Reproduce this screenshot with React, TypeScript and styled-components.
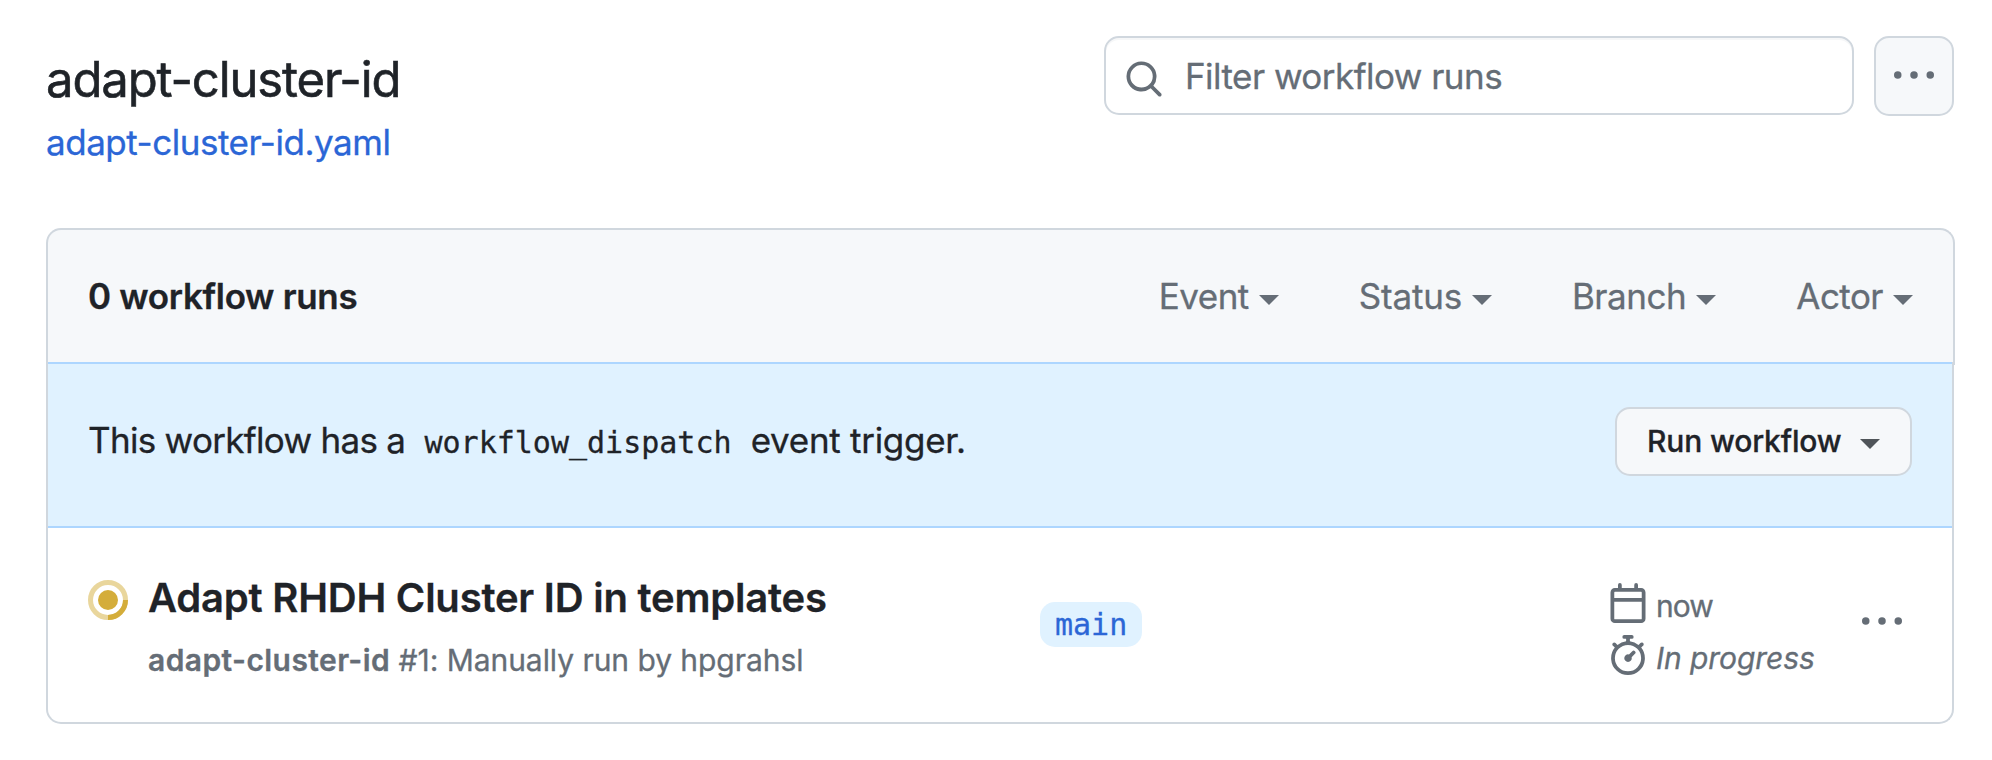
import React from "react";
import styled, { createGlobalStyle } from "styled-components";

const color = {
  text: "#1f2328",
  muted: "#656d76",
  link: "#2b66d6",
  border: "#d0d7de",
  subtle: "#f6f8fa",
  info: "#e0f2ff",
  infoBorder: "#add6ff",
  pending: "#d4ad3a",
};

const GlobalStyle = createGlobalStyle`
  * { box-sizing: border-box; }
  body {
    margin: 0;
    background: #fff;
    color: ${color.text};
    font-family: Inter, "Liberation Sans", sans-serif;
    font-size: 35px;
    line-height: 52px;
    -webkit-text-stroke: 0.3px currentColor;
  }
`;

const Page = styled.main`
  width: 1992px;
  height: 760px;
  padding: 36px 38px 0 46px;
`;

const Header = styled.header`
  display: flex;
  justify-content: space-between;
  align-items: flex-start;
  height: 192px;
`;

const Heading = styled.div`
  padding-top: 14px;
`;

const Title = styled.h1`
  margin: 0 0 6px;
  font-size: 49px;
  line-height: 60px;
  font-weight: 400;
  letter-spacing: -1.13px;
  -webkit-text-stroke: 0.6px currentColor;
`;

const FileLink = styled.a`
  display: block;
  color: ${color.link};
  letter-spacing: -0.47px;
  text-decoration: none;
`;

const Tools = styled.div`
  display: flex;
  gap: 20px;
`;

const SearchField = styled.label`
  display: flex;
  align-items: center;
  gap: 21px;
  width: 750px;
  height: 79px;
  padding: 0 18px;
  border: 2px solid ${color.border};
  border-radius: 15px;
  box-shadow: inset 0 2px 0 rgba(208, 215, 222, 0.2);
  color: ${color.muted};

  svg {
    margin-top: 7px;
  }
`;

const SearchInput = styled.input`
  flex: 1;
  min-width: 0;
  height: 52px;
  margin: 1px 0 0;
  padding: 0;
  border: 0;
  outline: 0;
  background: transparent;
  font: inherit;
  letter-spacing: -0.54px;

  &::placeholder {
    color: ${color.muted};
    opacity: 1;
  }
`;

const MoreButton = styled.button`
  display: flex;
  align-items: center;
  justify-content: center;
  width: 80px;
  height: 80px;
  padding: 0 0 2px;
  border: 2px solid ${color.border};
  border-radius: 15px;
  background: ${color.subtle};
  color: ${color.muted};
`;

const Icon = styled.svg`
  display: block;
  flex: none;
  width: 40px;
  height: 40px;
  fill: currentColor;
`;

const ListHeader = styled.div`
  display: flex;
  align-items: center;
  justify-content: space-between;
  height: 137px;
  margin-right: -1px;
  padding: 0 40px 4px;
  border: 2px solid ${color.border};
  border-bottom: 0;
  border-radius: 15px 15px 0 0;
  background: ${color.subtle};
`;

const Count = styled.strong`
  font-weight: 600;
  letter-spacing: -0.32px;
`;

const Filters = styled.div`
  display: flex;
  gap: 80px;
`;

const Filter = styled.span<{ $tracking: number }>`
  display: flex;
  align-items: center;
  gap: 10px;
  color: ${color.muted};
  letter-spacing: ${(p) => p.$tracking}px;
`;

const Caret = styled.i<{ $drop: number }>`
  width: 20px;
  height: 10px;
  margin-top: ${(p) => p.$drop}px;
  border: 10px solid transparent;
  border-top-color: currentColor;
  border-bottom: 0;
`;

const ListBody = styled.div`
  position: relative;
  margin-top: -3px;
  border: 2px solid ${color.border};
  border-top: 0;
  border-radius: 0 0 15px 15px;
`;

const Banner = styled.div`
  display: flex;
  align-items: flex-start;
  justify-content: space-between;
  height: 166px;
  padding: 43px 40px 0;
  border: solid ${color.infoBorder};
  border-width: 2px 0;
  background: ${color.info};
`;

const BannerText = styled.p`
  margin: 7px 0 0;
  letter-spacing: -0.7px;
`;

const Code = styled.code`
  padding: 0 10px;
  font-family: "DejaVu Sans Mono", monospace;
  font-size: 30px;
  line-height: 40px;
  letter-spacing: 0;
`;

const Trigger = styled.span`
  letter-spacing: -0.28px;
`;

const RunButton = styled.button`
  display: flex;
  align-items: center;
  justify-content: space-between;
  width: 297px;
  height: 69px;
  padding: 0 30px 2px;
  border: 2px solid ${color.border};
  border-radius: 15px;
  background: ${color.subtle};
  color: ${color.text};
  font-family: inherit;
  font-size: 30px;
  font-weight: 500;
  letter-spacing: -0.15px;

  i {
    color: #4f5459;
  }
`;

const RunRow = styled.article`
  display: grid;
  grid-template-columns: 60px 892px 568px 254px 40px;
  align-items: start;
  height: 194px;
  padding: 39px 0 0 40px;
  color: ${color.muted};
  font-size: 30px;
  line-height: 45px;
`;

const StatusIcon = styled(Icon)`
  margin-top: 13px;
  color: ${color.pending};
`;

const RunTitle = styled.h2`
  margin: 1px 0 10px;
  color: ${color.text};
  font-size: 40px;
  line-height: 60px;
  font-weight: 600;
  letter-spacing: -0.22px;
`;

const RunDetail = styled.p`
  margin: 0;
  letter-spacing: -0.05px;
`;

const WorkflowName = styled.b`
  font-weight: 600;
  letter-spacing: 0.42px;
`;

const Branch = styled.span`
  justify-self: start;
  margin-top: 35px;
  padding: 0 15px;
  border-radius: 15px;
  background: ${color.info};
  color: ${color.link};
  font-family: "DejaVu Sans Mono", monospace;
`;

const Meta = styled.div`
  margin-top: 10px;
`;

const MetaLine = styled.div<{ $tracking: number }>`
  display: flex;
  align-items: center;
  gap: 8px;
  height: 52px;
  letter-spacing: ${(p) => p.$tracking}px;

  span, em {
    padding-top: 6px;
  }
`;

const RowMenu = styled.button`
  margin: 34px 0 0;
  padding: 0;
  border: 0;
  background: none;
  color: inherit;
`;

const Dots = () => (
  <Icon viewBox="0 0 16 16">
    <circle cx="1.5" cy="8" r="1.5" />
    <circle cx="8" cy="8" r="1.5" />
    <circle cx="14.5" cy="8" r="1.5" />
  </Icon>
);

const filters = [
  { label: "Event", tracking: -0.5 },
  { label: "Status", tracking: -0.2 },
  { label: "Branch", tracking: -0.45 },
  { label: "Actor", tracking: -0.55 },
];

export default function App() {
  return (
    <Page>
      <GlobalStyle />
      <Header>
        <Heading>
          <Title>adapt-cluster-id</Title>
          <FileLink>adapt-cluster-id.yaml</FileLink>
        </Heading>
        <Tools>
          <SearchField>
            <Icon viewBox="0 0 16 16">
              <path d="M10.68 11.74a6 6 0 0 1-7.922-8.982 6 6 0 0 1 8.982 7.922l3.04 3.04a.749.749 0 0 1-.326 1.275.749.749 0 0 1-.734-.215ZM11.5 7a4.499 4.499 0 1 0-8.997 0A4.499 4.499 0 0 0 11.5 7Z" />
            </Icon>
            <SearchInput placeholder="Filter workflow runs" />
          </SearchField>
          <MoreButton aria-label="More">
            <Dots />
          </MoreButton>
        </Tools>
      </Header>

      <ListHeader>
        <Count>0 workflow runs</Count>
        <Filters>
          {filters.map((f) => (
            <Filter key={f.label} $tracking={f.tracking}>
              {f.label}
              <Caret $drop={9} />
            </Filter>
          ))}
        </Filters>
      </ListHeader>

      <ListBody>
        <Banner>
          <BannerText>
            This workflow has a <Code>workflow_dispatch</Code> <Trigger>event trigger.</Trigger>
          </BannerText>
          <RunButton>
            Run workflow
            <Caret $drop={7} />
          </RunButton>
        </Banner>
        <RunRow>
          <StatusIcon viewBox="0 0 16 16">
            <circle cx="8" cy="8" r="7" fill="none" stroke="currentColor" strokeWidth="2" opacity="0.5" />
            <path d="M15 8a7 7 0 0 1-7 7" fill="none" stroke="currentColor" strokeWidth="2" />
            <circle cx="8" cy="8" r="4" />
          </StatusIcon>
          <div>
            <RunTitle>Adapt RHDH Cluster ID in templates</RunTitle>
            <RunDetail>
              <WorkflowName>adapt-cluster-id</WorkflowName> #1: Manually run by hpgrahsl
            </RunDetail>
          </div>
          <Branch>main</Branch>
          <Meta>
            <MetaLine $tracking={-0.9}>
              <Icon viewBox="0 0 16 16">
                <path d="M4.75 0a.75.75 0 0 1 .75.75V2h5V.75a.75.75 0 0 1 1.5 0V2h1.25c.966 0 1.75.784 1.75 1.75v10.5A1.75 1.75 0 0 1 13.25 16H2.75A1.75 1.75 0 0 1 1 14.25V3.75C1 2.784 1.784 2 2.75 2H4V.75A.75.75 0 0 1 4.75 0ZM2.5 7.5v6.75c0 .138.112.25.25.25h10.5a.25.25 0 0 0 .25-.25V7.5Zm10.75-4H2.75a.25.25 0 0 0-.25.25V6h11V3.75a.25.25 0 0 0-.25-.25Z" />
              </Icon>
              <span>now</span>
            </MetaLine>
            <MetaLine $tracking={-0.07}>
              <Icon viewBox="0 0 16 16">
                <path d="M5.75.75A.75.75 0 0 1 6.5 0h3a.75.75 0 0 1 0 1.5h-.75v1l-.001.041a6.724 6.724 0 0 1 3.464 1.435l.007-.006.75-.75a.749.749 0 0 1 1.275.326.749.749 0 0 1-.215.734l-.75.75-.006.007a6.75 6.75 0 1 1-10.548 0L2.72 5.03l-.75-.75a.751.751 0 0 1 .018-1.042.751.751 0 0 1 1.042-.018l.75.75.007.006A6.72 6.72 0 0 1 7.25 2.541V1.5H6.5a.75.75 0 0 1-.75-.75ZM8 14.5a5.25 5.25 0 1 0-.001-10.501A5.25 5.25 0 0 0 8 14.5Zm.389-6.7 1.33-1.33a.75.75 0 1 1 1.061 1.06L9.45 8.861A1.503 1.503 0 0 1 8 10.75a1.499 1.499 0 1 1 .389-2.95Z" />
              </Icon>
              <em>In progress</em>
            </MetaLine>
          </Meta>
          <RowMenu aria-label="Run options">
            <Dots />
          </RowMenu>
        </RunRow>
      </ListBody>
    </Page>
  );
}
